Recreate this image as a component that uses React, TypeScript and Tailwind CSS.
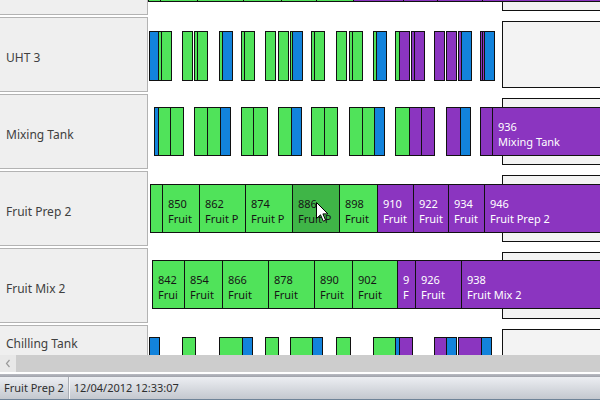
import React from 'react';

// x0 / x1 are page pixels of the left and right border lines
type Seg = { x0: number; x1: number; c: 'g' | 'b' | 'p' | 'h'; num?: string; name?: string };

const CHART_X = 148;

const fill: Record<Seg['c'], string> = {
  g: 'bg-[#50e35a] text-[#151515]',
  h: 'bg-[#3fb547] text-[#151515]',
  b: 'bg-[#1283dc] text-white',
  p: 'bg-[#8b35c0] text-white',
};

const s = (x0: number, x1: number, c: Seg['c'], num?: string, name?: string): Seg => ({ x0, x1, c, num, name });

const rows: { label: string; barTop: number; barH: number; labelTop?: number; segs: Seg[] }[] = [
  {
    label: '',
    barTop: 13,
    barH: 49,
    segs: [
      s(148, 160, 'g'), s(160, 197, 'g'), s(197, 243, 'g'), s(243, 281, 'g'), s(281, 316, 'g'), s(316, 353, 'g'),
      s(353, 403, 'p'), s(403, 437, 'p'), s(437, 482, 'p'), s(482, 640, 'p'),
    ],
  },
  {
    label: 'UHT 3',
    barTop: 14,
    barH: 50,
    segs: [
      s(149, 154, 'b'),
      s(158, 161, 'g'), s(161, 163, 'g'),
      s(182, 185, 'g'),
      s(194, 197, 'g'), s(197, 200, 'g'),
      s(219, 222, 'g'), s(222, 231, 'b'),
      s(241, 244, 'g'), s(244, 246, 'g'),
      s(265, 269, 'g'),
      s(278, 281, 'g'),
      s(290, 292, 'g'), s(292, 302, 'b'),
      s(311, 314, 'g'), s(314, 317, 'g'),
      s(336, 340, 'g'),
      s(349, 352, 'g'), s(352, 354, 'g'),
      s(373, 376, 'g'), s(376, 385, 'b'),
      s(395, 399, 'g'), s(399, 404, 'p'),
      s(411, 414, 'p'), s(414, 416, 'p'),
      s(434, 437, 'p'),
      s(446, 449, 'p'),
      s(458, 461, 'p'), s(461, 470, 'b'),
      s(480, 482, 'p'), s(482, 484, 'p'), s(484, 494, 'b'),
    ],
  },
  {
    label: 'Mixing Tank',
    barTop: 13,
    barH: 49,
    segs: [
      s(154, 158, 'b'), s(158, 170, 'g'), s(170, 183, 'g'),
      s(194, 207, 'g'), s(207, 220, 'g'), s(220, 226, 'b'),
      s(241, 253, 'g'), s(253, 267, 'g'),
      s(278, 291, 'g'), s(291, 297, 'b'),
      s(311, 324, 'g'), s(324, 337, 'g'),
      s(349, 362, 'g'), s(362, 374, 'g'), s(374, 380, 'b'),
      s(395, 409, 'g'), s(409, 421, 'p'), s(421, 434, 'p'),
      s(446, 460, 'p'), s(460, 465, 'b'),
      s(480, 492, 'p'), s(492, 640, 'p', '936', 'Mixing Tank'),
    ],
  },
  {
    label: 'Fruit Prep 2',
    barTop: 13,
    barH: 49,
    segs: [
      s(150, 162, 'g'),
      s(162, 199, 'g', '850', 'Fruit Prep 2'),
      s(199, 245, 'g', '862', 'Fruit Prep 2'),
      s(245, 292, 'g', '874', 'Fruit Prep 2'),
      s(292, 339, 'h', '886', 'Fruit Prep 2'),
      s(339, 377, 'g', '898', 'Fruit Prep 2'),
      s(377, 413, 'p', '910', 'Fruit Prep 2'),
      s(413, 448, 'p', '922', 'Fruit Prep 2'),
      s(448, 484, 'p', '934', 'Fruit Prep 2'),
      s(484, 640, 'p', '946', 'Fruit Prep 2'),
    ],
  },
  {
    label: 'Fruit Mix 2',
    barTop: 12,
    barH: 49,
    segs: [
      s(152, 184, 'g', '842', 'Fruit Mix 2'),
      s(184, 222, 'g', '854', 'Fruit Mix 2'),
      s(222, 268, 'g', '866', 'Fruit Mix 2'),
      s(268, 314, 'g', '878', 'Fruit Mix 2'),
      s(314, 352, 'g', '890', 'Fruit Mix 2'),
      s(352, 397, 'g', '902', 'Fruit Mix 2'),
      s(397, 415, 'p', '914', 'Fruit Mix 2'),
      s(415, 461, 'p', '926', 'Fruit Mix 2'),
      s(461, 640, 'p', '938', 'Fruit Mix 2'),
    ],
  },
  {
    label: 'Chilling Tank',
    barTop: 12,
    barH: 49,
    labelTop: 9,
    segs: [
      s(149, 154, 'b'),
      s(182, 195, 'g'),
      s(219, 242, 'g'), s(242, 247, 'b'),
      s(265, 278, 'g'),
      s(290, 312, 'g'), s(312, 317, 'b'),
      s(336, 350, 'g'),
      s(373, 395, 'g'), s(395, 399, 'b'), s(399, 412, 'p'),
      s(434, 446, 'p'), s(446, 452, 'b'),
      s(458, 481, 'p'), s(481, 486, 'b'),
    ],
  },
];

// characters that don't fit wrap onto a hidden second line, like GDI clipping
function Line({ text }: { text: string }) {
  return <div className="h-[15px] overflow-hidden break-all">{text}</div>;
}

function Bar({ seg, top, h }: { seg: Seg; top: number; h: number }) {
  return (
    <div
      className={`absolute box-border border border-[#111] overflow-hidden pl-[5px] pr-[4px] pt-[11px] text-[11px] leading-[15px] ${fill[seg.c]}`}
      style={{ left: seg.x0 - CHART_X, width: seg.x1 - seg.x0 + 1, top, height: h }}
    >
      {seg.num && (
        <>
          <Line text={seg.num} />
          <Line text={seg.name ?? ''} />
        </>
      )}
    </div>
  );
}

export default function App() {
  return (
    <div className="relative w-[600px] h-[400px] overflow-hidden bg-white flex flex-col font-['Noto_Sans',sans-serif]">
      <div className="h-[355px] overflow-hidden shrink-0">
        <div className="-mt-[60px] flex flex-col gap-[2px]">
          {rows.map((row, i) => (
            <div key={i} className="flex h-[75px]">
              <div
                className={`w-[148px] shrink-0 bg-[#efefef] border border-l-0 border-[#b3b3b3] flex pl-[6px] text-[12px] text-[#404040] ${
                  row.labelTop !== undefined ? 'items-start pt-[9px]' : 'items-center pt-[6px]'
                }`}
              >
                {row.label}
              </div>
              <div className="relative flex-1">
                <div className="absolute left-[354px] top-[4px] h-[67px] w-[140px] bg-[#f3f3f3] border border-[#111]" />
                {row.segs.map((seg, j) => (
                  <Bar key={j} seg={seg} top={row.barTop} h={row.barH} />
                ))}
              </div>
            </div>
          ))}
        </div>
      </div>

      {/* horizontal scrollbar */}
      <div className="h-[17px] shrink-0 flex bg-[#cdcdcd]">
        <div className="w-[16px] bg-[#e8e8e8] flex items-center justify-center">
          <svg width="6" height="9" viewBox="0 0 6 9">
            <path d="M4.5 1 L1.5 4.5 L4.5 8" fill="none" stroke="#9a9a9a" strokeWidth="1.2" />
          </svg>
        </div>
      </div>
      <div className="h-[2px] shrink-0 bg-white" />
      <div className="h-[3px] shrink-0 bg-gradient-to-b from-[#b9bbc2] to-[#9fa2aa]" />

      {/* status bar */}
      <div className="flex-1 flex items-center text-[11px] text-[#2e2e2e] bg-gradient-to-b from-[#eceef2] to-[#c4c8cf] border-b border-[#6f8398]">
        <span className="pl-[4px] pr-[4px]">Fruit Prep 2</span>
        <div className="self-stretch w-[2px] border-l border-[#a9adb5] bg-[#f4f5f7]" />
        <span className="pl-[4px]">12/04/2012 12:33:07</span>
      </div>

      {/* mouse pointer */}
      <svg className="absolute left-[316px] top-[202px]" width="13" height="21" viewBox="0 0 13 21">
        <path d="M0.5 0.5 L0.5 16.5 L4.5 12.8 L7.3 19.2 L9.6 18.2 L6.9 11.9 L11.9 11.9 Z" fill="#fff" stroke="#000" strokeWidth="1" />
      </svg>
    </div>
  );
}
